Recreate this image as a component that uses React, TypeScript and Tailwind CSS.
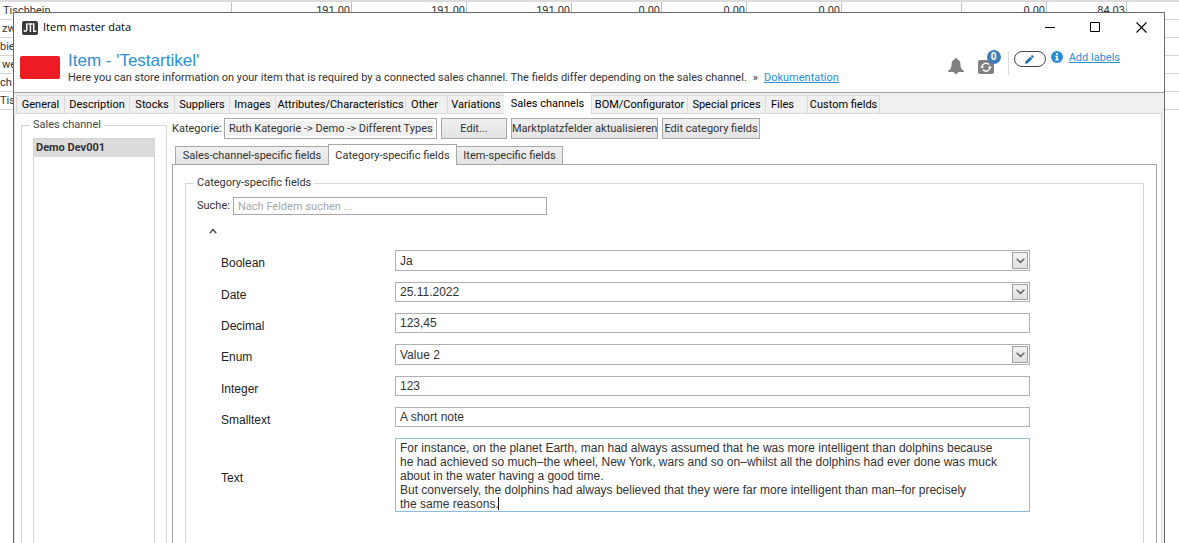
import React from "react";

const columns = [
  "w-[232px]",
  "w-[120px]",
  "w-[115px]",
  "w-[105px]",
  "w-[90px]",
  "w-[85px]",
  "w-[95px]",
  "w-[120px]",
  "w-[85px]",
  "w-[80px]",
];

const rows: string[][] = [
  ["Tischbein", "191.00", "191.00", "191.00", "0.00", "0.00", "0.00", "", "0.00", "84.03"],
  ["zw", "", "", "", "", "", "", "", "", ""],
  ["bie", "", "", "", "", "", "", "", "", ""],
  ["we", "", "", "", "", "", "", "", "", ""],
  ["ch e", "", "", "", "", "", "", "", "", ""],
  ["Tisc", "", "", "", "", "", "", "", "", ""],
];

const firstCellPadding = ["pl-[3px]", "pl-[2px]", "pl-0", "pl-[2px]", "pl-0", "pl-0"];

function BackgroundTable() {
  return (
    <div className="absolute inset-0 overflow-hidden border-t-2 border-[#dcdcdc]">
      <table className="w-full table-fixed border-separate border-spacing-0 text-[11px] leading-[17px] text-[#333]">
        <colgroup>
          {columns.map((c, i) => (
            <col key={i} className={c} />
          ))}
          <col />
        </colgroup>
        <tbody>
          {rows.map((row, r) => (
            <tr key={r} className="h-[18px]">
              {row.map((cell, c) => (
                <td
                  key={c}
                  className={`h-[18px] overflow-hidden whitespace-nowrap border-r border-b border-r-[#b9c3d6] border-b-[#d4d4d4] py-0 ${
                    c === 0 ? `${firstCellPadding[r]} text-left` : "pr-px text-right"
                  }`}
                >
                  {cell}
                </td>
              ))}
              <td className="border-b border-[#d4d4d4] p-0" />
            </tr>
          ))}
        </tbody>
      </table>
    </div>
  );
}

function AppIcon() {
  return (
    <svg width="16" height="14" viewBox="0 0 16 14" aria-hidden="true">
      <rect width="16" height="14" rx="2" fill="#3a3a3a" />
      <path
        d="M4.8 2.2V8.6a1.7 1.7 0 0 1-3 1M6.2 3H10.6M8.4 3V11M11.7 2.2V10.2H14.4"
        fill="none"
        stroke="#fff"
        strokeWidth="1.5"
      />
    </svg>
  );
}

function TitleBar() {
  return (
    <div className="flex h-[29px] items-center pl-2">
      <AppIcon />
      <h1 className="ml-[5px] flex-1 font-['Open_Sans','Noto_Sans',sans-serif] text-[11px] text-black">
        Item master data
      </h1>
      <div className="flex">
        <button type="button" aria-label="Minimize" className="flex h-[29px] w-[45px] items-center justify-center">
          <svg width="11" height="11" viewBox="0 0 11 11">
            <path d="M0 5.5H10" stroke="#000" />
          </svg>
        </button>
        <button type="button" aria-label="Maximize" className="flex h-[29px] w-[45px] items-center justify-center">
          <svg width="11" height="11" viewBox="0 0 11 11">
            <path d="M.5.5H9.5V9.5H.5Z" fill="none" stroke="#000" />
          </svg>
        </button>
        <button type="button" aria-label="Close" className="flex h-[29px] w-[46px] items-center justify-center">
          <svg width="11" height="11" viewBox="0 0 11 11">
            <path d="M.5.5 10.5 10.5M10.5.5.5 10.5" stroke="#000" strokeWidth="1.1" />
          </svg>
        </button>
      </div>
    </div>
  );
}

function HeaderTools() {
  return (
    <div className="flex pr-11 pt-2">
      <button type="button" aria-label="Notifications" className="mt-2 h-4 w-4">
        <svg width="16" height="16" viewBox="0 0 16 16" fill="#808080">
          <path d="M8 0c.8 0 1.200.5 1.200 1.200C11.400 1.800 12.400 3.600 12.400 6c0 3.500 1 5.300 3.600 7v1H0v-1C2.600 11.300 3.600 9.500 3.600 6c0-2.400 1-4.200 3.200-4.800C6.800.5 7.200 0 8 0Z" />
          <path d="M6 14h4a2 2 0 0 1-4 0Z" />
        </svg>
      </button>
      <button type="button" aria-label="Synchronize" className="relative ml-[14px] mt-[10px] h-[14px] w-4">
        <svg width="16" height="14" viewBox="0 0 16 14">
          <rect width="16" height="14" rx="2" fill="#808080" />
          <path
            d="M4 6.600A4 4 0 0 1 11 4.600M12 7.600A4 4 0 0 1 5 9.800"
            fill="none"
            stroke="#fff"
            strokeWidth="1.5"
          />
          <path d="M2.200 6.300H6L4.100 8.800ZM10 8H13.800L11.900 5.400Z" fill="#fff" />
        </svg>
        <span className="absolute -top-[10px] left-[9px] flex h-[14px] w-[14px] items-center justify-center rounded-full bg-[#3f7cba] text-[10px] font-bold leading-none text-white">
          0
        </span>
      </button>
      <div className="ml-[14px] mt-px h-6 w-px bg-[#dcdcdc]" />
      <button
        type="button"
        aria-label="Edit labels"
        className="ml-[5px] mt-px flex h-4 w-8 items-center justify-center rounded-full border border-[#3c4650]"
      >
        <svg width="9" height="9" viewBox="0 0 9 9" fill="#1b6fae">
          <path d="M0 9 .7 6.300 5.300 1.700 7.300 3.700 2.700 8.300ZM5.800 1.200 6.700.3Q7.300-.1 8 .6T8.700 2.300L7.800 3.200Z" />
        </svg>
      </button>
      <svg className="ml-[5px] mt-px" width="12" height="12" viewBox="0 0 12 12" aria-hidden="true">
        <circle cx="6" cy="6" r="6" fill="#2b8fd6" />
        <path d="M5 2.200H7V3.800H5ZM4.500 4.800H7V8.300H7.700V9.500H4.400V8.300H5.200V5.900H4.500Z" fill="#fff" />
      </svg>
      <a href="#labels" className="ml-[6px] h-4 text-[11px] leading-4 text-[#2b8fd6] underline">
        Add labels
      </a>
    </div>
  );
}

function Header() {
  return (
    <header className="flex h-[51px] border-b border-[#a0a0a0] pl-[6px]">
      <div className="mt-[14px] h-[23px] w-10 shrink-0 rounded-[2px] bg-[#ed1c24]" />
      <div className="ml-2 min-w-0 flex-1 whitespace-nowrap pt-[9px]">
        <h2 className="font-['Liberation_Sans',Arial,sans-serif] text-[17px] leading-5 text-[#2b8fd6]">
          Item - 'Testartikel'
        </h2>
        <p className="text-[11px] leading-[14px] text-[#333]">
          Here you can store information on your item that is required by a connected sales channel. The fields differ
          depending on the sales channel.
          <span className="mx-[6px]">»</span>
          <a href="#dokumentation" className="text-[#2b8fd6] underline">
            Dokumentation
          </a>
        </p>
      </div>
      <HeaderTools />
    </header>
  );
}

const mainTabs: { label: string; width: string }[] = [
  { label: "General", width: "w-[48px]" },
  { label: "Description", width: "w-[65px]" },
  { label: "Stocks", width: "w-[45px]" },
  { label: "Suppliers", width: "w-[55px]" },
  { label: "Images", width: "w-[46px]" },
  { label: "Attributes/Characteristics", width: "w-[130px]" },
  { label: "Other", width: "w-[42px] pr-1" },
  { label: "Variations", width: "w-[57px]" },
  { label: "Sales channels", width: "w-[87px]" },
  { label: "BOM/Configurator", width: "w-[96px]" },
  { label: "Special prices", width: "w-[78px]" },
  { label: "Files", width: "w-[42px] pr-2" },
  { label: "Custom fields", width: "w-[73px]" },
];

function MainTabs() {
  return (
    <div role="tablist" className="flex h-5 items-end bg-[#f0f0f0] pl-[2px]">
      {mainTabs.map(({ label, width }) => {
        const active = label === "Sales channels";
        return (
          <button
            key={label}
            type="button"
            role="tab"
            aria-selected={active}
            className={`shrink-0 whitespace-nowrap text-[11px] text-black ${width} ${
              active
                ? "z-10 -mb-px h-[21px] bg-white leading-[21px]"
                : "h-[18px] border-t border-l border-[#dadada] leading-[18px] last:border-r"
            }`}
          >
            {label}
          </button>
        );
      })}
    </div>
  );
}

function SalesChannelList() {
  return (
    <fieldset className="flex w-[146px] shrink-0 flex-col border border-b-0 border-[#d6d6d6] px-[11px]">
      <legend className="-ml-[3px] px-[3px] text-[11px] leading-[14px] text-[#444]">Sales channel</legend>
      <ul className="mt-[6px] flex-1 border border-b-0 border-[#d6d6d6]">
        <li className="h-[18px] bg-[#dcdcdc] pl-[2px] text-[11px] font-bold leading-[17px] text-[#333]">
          Demo Dev001
        </li>
      </ul>
    </fieldset>
  );
}

const buttonClass =
  "h-[21px] shrink-0 whitespace-nowrap border border-[#a8a8a8] bg-linear-to-b from-[#f0f0f0] to-[#e3e3e3] text-[11px] leading-[19px] text-[#333]";

function CategoryBar() {
  return (
    <div className="flex h-[21px] items-center gap-1">
      <label htmlFor="kategorie" className="w-12 shrink-0 whitespace-nowrap text-[11px] leading-[21px] text-[#333]">
        Kategorie:
      </label>
      <div className="h-[21px] w-[213px] border border-[#a8a8a8] bg-white p-[2px]">
        <input
          id="kategorie"
          readOnly
          value="Ruth Kategorie -> Demo -> Different Types"
          className="block h-[15px] w-full bg-[#f0f0f0] pl-[2px] text-[11px] leading-[15px] text-[#333] outline-none"
        />
      </div>
      <button type="button" className={`${buttonClass} w-[66px]`}>Edit...</button>
      <button type="button" className={`${buttonClass} w-[147px]`}>Marktplatzfelder aktualisieren</button>
      <button type="button" className={`${buttonClass} w-[98px]`}>Edit category fields</button>
    </div>
  );
}

const idleTab =
  "h-[18px] border border-b-0 border-[#a8a8a8] bg-linear-to-b from-[#f0f0f0] to-[#e3e3e3] text-[11px] leading-[17px] text-[#333]";

function FieldTabs() {
  return (
    <div role="tablist" className="mt-[5px] flex h-5 items-end pl-[3px]">
      <button type="button" role="tab" aria-selected={false} className={`${idleTab} w-[154px]`}>
        Sales-channel-specific fields
      </button>
      <button
        type="button"
        role="tab"
        aria-selected={true}
        className="z-10 -mb-px -ml-px h-[21px] w-[129px] border border-b-0 border-[#a8a8a8] bg-white pt-px text-[11px] leading-[20px] text-[#333]"
      >
        Category-specific fields
      </button>
      <button type="button" role="tab" aria-selected={false} className={`${idleTab} -ml-px w-[107px]`}>
        Item-specific fields
      </button>
    </div>
  );
}

function DropMark() {
  return (
    <span className="pointer-events-none absolute inset-y-[2px] right-[2px] flex w-4 items-center justify-center border border-[#a0a0a0] bg-linear-to-b from-[#f2f2f2] to-[#e0e0e0]">
      <svg width="9" height="6" viewBox="0 0 9 6" aria-hidden="true">
        <path d="M.6.8 4.500 4.400 8.400.8" fill="none" stroke="#666" strokeWidth="1.5" />
      </svg>
    </span>
  );
}

type Field = { label: string; value: string; kind: "select" | "date" | "input" };

const fields: Field[] = [
  { label: "Boolean", value: "Ja", kind: "select" },
  { label: "Date", value: "25.11.2022", kind: "date" },
  { label: "Decimal", value: "123,45", kind: "input" },
  { label: "Enum", value: "Value 2", kind: "select" },
  { label: "Integer", value: "123", kind: "input" },
  { label: "Smalltext", value: "A short note", kind: "input" },
];

const note = `For instance, on the planet Earth, man had always assumed that he was more intelligent than dolphins because
he had achieved so much–the wheel, New York, wars and so on–whilst all the dolphins had ever done was muck
about in the water having a good time.
But conversely, the dolphins had always believed that they were far more intelligent than man–for precisely
the same reasons.`;

const fieldFont = "font-['Liberation_Sans',Arial,sans-serif]";

const boxClass =
  "block w-full appearance-none rounded-none border border-[#b0b0b0] bg-white pl-1 text-[12px] leading-[18px] text-[#333] outline-none";

function FieldRow({ label, value, kind }: Field) {
  const id = label.toLowerCase();
  return (
    <div className={`flex items-center ${fieldFont}`}>
      <label htmlFor={id} className="w-[174px] shrink-0 pt-[5px] text-[12px] leading-[14px] text-[#222]">
        {label}
      </label>
      <div className="relative flex-1">
        {kind === "select" ? (
          <select id={id} defaultValue={value} className={`${boxClass} h-[21px]`}>
            <option>{value}</option>
          </select>
        ) : (
          <input id={id} type="text" defaultValue={value} className={`${boxClass} h-5`} />
        )}
        {kind !== "input" && <DropMark />}
      </div>
    </div>
  );
}

function FieldsPanel() {
  return (
    <div className="flex flex-1 flex-col border border-b-0 border-[#a8a8a8] px-3 pt-[11px]">
      <fieldset className="flex-1 border border-b-0 border-[#d6d6d6] pl-[11px] pr-[113px]">
        <legend className="-ml-[3px] px-[3px] text-[11px] leading-[14px] text-[#333]">Category-specific fields</legend>
        <div className="mt-[7px] flex items-center">
          <label htmlFor="suche" className="w-9 text-[11px] leading-[18px] text-[#333]">
            Suche:
          </label>
          <input
            id="suche"
            type="text"
            placeholder="Nach Feldern suchen ..."
            className="h-[18px] w-[314px] border border-[#a8a8a8] bg-white pl-1 text-[11px] outline-none placeholder:text-[#a8a8a8]"
          />
        </div>
        <button type="button" aria-label="Collapse" className="ml-3 mt-[13px] flex h-[6px] w-[8px]">
          <svg width="8" height="6" viewBox="0 0 8 6">
            <path d="M.8 5.200 4 1.500 7.200 5.200" fill="none" stroke="#555" strokeWidth="1.500" />
          </svg>
        </button>
        <div className="ml-6 mt-4 flex flex-col gap-[11px]">
          {fields.map((f) => (
            <FieldRow key={f.label} {...f} />
          ))}
          <div className={`flex items-center ${fieldFont}`}>
            <label htmlFor="text" className="w-[174px] shrink-0 pt-[5px] text-[12px] leading-[14px] text-[#222]">
              Text
            </label>
            <div className="relative flex-1">
              <textarea
                id="text"
                defaultValue={note}
                className="block h-[74px] w-full resize-none overflow-hidden border border-[#8fbcd8] bg-white py-[2px] pl-1 text-[12px] leading-[14px] text-[#333] outline-none"
              />
              <span className="absolute bottom-[2px] left-[103px] h-[13px] w-px bg-black" />
            </div>
          </div>
        </div>
      </fieldset>
    </div>
  );
}

export default function App() {
  return (
    <div className="relative flex min-h-screen flex-col overflow-hidden bg-white font-['Roboto','Liberation_Sans',sans-serif]">
      <BackgroundTable />
      <main className="relative ml-[13px] mr-[14px] mt-3 flex flex-1 flex-col border border-b-0 border-[#6b6b6b] bg-white">
        <TitleBar />
        <Header />
        <MainTabs />
        <div className="flex flex-1 bg-[#f0f0f0] pr-[2px]">
          <div className="flex min-w-0 flex-1 border border-b-0 border-[#dadada] bg-white pl-[6px] pr-1 pt-1">
            <SalesChannelList />
            <div className="ml-[5px] flex min-w-0 flex-1 flex-col">
              <CategoryBar />
              <FieldTabs />
              <FieldsPanel />
            </div>
          </div>
        </div>
      </main>
    </div>
  );
}
